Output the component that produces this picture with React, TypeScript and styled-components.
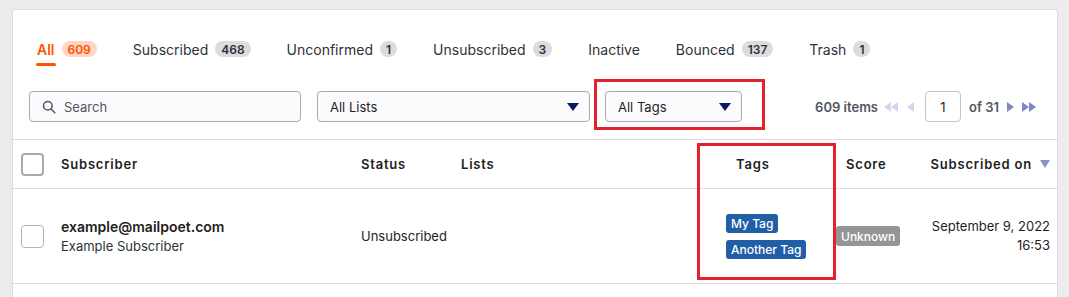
import { FC } from "react";
import styled, { createGlobalStyle } from "styled-components";

const GlobalStyle = createGlobalStyle`
  body {
    margin: 0;
    background: #ececec;
    font-family: Inter, "Liberation Sans", sans-serif;
    color: #1e1e1e;
  }
`;

const Page = styled.div`
  padding: 9px 11px 0 12px;
  height: 297px;
  box-sizing: border-box;
  overflow: hidden;
`;

const Card = styled.div`
  position: relative;
  background: #fff;
  border: 1px solid #dcdcde;
  border-bottom: none;
  border-radius: 4px 4px 0 0;
  height: 320px;
`;

const Tabs = styled.div`
  display: flex;
  align-items: center;
  gap: 36px;
  padding: 26px 0 0 24px;
  height: 26px;
`;

const Tab = styled.div<{ $active?: boolean }>`
  position: relative;
  display: flex;
  align-items: center;
  gap: 7px;
  font-size: 14px;
  font-weight: ${(p) => (p.$active ? 600 : 400)};
  color: ${(p) => (p.$active ? "#ff5301" : "#2c3338")};
`;

const TabLabel = styled.span<{ $active?: boolean }>`
  position: relative;
  &:after {
    content: "";
    display: ${(p) => (p.$active ? "block" : "none")};
    position: absolute;
    left: -1px;
    right: -1px;
    top: 22px;
    height: 3px;
    border-radius: 2px;
    background: #ff5301;
  }
`;

const Count = styled.span<{ $active?: boolean }>`
  display: inline-flex;
  align-items: center;
  height: 16px;
  padding: 0 6px;
  border-radius: 8px;
  font-size: 12px;
  font-weight: 600;
  background: ${(p) => (p.$active ? "#ffd6c4" : "#dcdcde")};
  color: ${(p) => (p.$active ? "#ff5301" : "#2c3338")};
`;

const Filters = styled.div`
  display: flex;
  align-items: center;
  padding: 29px 0 0 16px;
  height: 31px;
`;

const Field = styled.div<{ $width: number; $gap: number }>`
  display: flex;
  align-items: center;
  box-sizing: border-box;
  width: ${(p) => p.$width}px;
  height: 31px;
  margin-right: ${(p) => p.$gap}px;
  padding: 0 10px 0 12px;
  border: 1px solid #a7aaad;
  border-radius: 4px;
  background: #fbfbfd;
  font-size: 13px;
  color: #1e1e1e;
`;

const Placeholder = styled.span`
  margin-left: 8px;
  color: #50575e;
`;

const Arrow = styled.span`
  margin-left: auto;
  width: 0;
  height: 0;
  border-left: 6px solid transparent;
  border-right: 6px solid transparent;
  border-top: 8px solid #0a1a60;
`;

const Pager = styled.div`
  display: flex;
  align-items: center;
  margin-left: auto;
  margin-right: 21px;
  font-size: 13px;
  font-weight: 600;
  color: #50575e;
`;

const PageInput = styled.div`
  box-sizing: border-box;
  width: 36px;
  height: 31px;
  margin: 0 8px 0 11px;
  border: 1px solid #c3c4c7;
  border-radius: 4px;
  display: flex;
  align-items: center;
  justify-content: center;
  font-weight: 400;
  color: #1e1e1e;
`;

const PagerIcon = styled.svg<{ $muted?: boolean }>`
  fill: ${(p) => (p.$muted ? "#d3d6ef" : "#8088c6")};
  margin-left: 6px;
`;

const Row = styled.div<{ $head?: boolean }>`
  display: grid;
  grid-template-columns: 48px 300px 100px 265px 110px 92px 1fr;
  align-items: center;
  height: ${(p) => (p.$head ? 48 : 94)}px;
  border-top: 1px solid #dcdcde;
`;

const Table = styled.div`
  margin-top: 17px;
  & > div:last-child {
    border-bottom: 1px solid #dcdcde;
  }
`;

const HeadCell = styled.div<{ $pad?: number; $right?: boolean }>`
  display: flex;
  align-items: center;
  justify-content: ${(p) => (p.$right ? "flex-end" : "flex-start")};
  gap: 8px;
  padding-left: ${(p) => p.$pad ?? 0}px;
  padding-right: ${(p) => (p.$right ? 7 : 0)}px;
  font-size: 13px;
  font-weight: 600;
  letter-spacing: 0.8px;
  color: #1e1e1e;
`;

const Cell = styled.div<{ $right?: boolean }>`
  display: flex;
  flex-direction: column;
  align-items: ${(p) => (p.$right ? "flex-end" : "flex-start")};
  padding-right: ${(p) => (p.$right ? 7 : 0)}px;
  font-size: 13px;
  line-height: 19px;
  color: #1e1e1e;
`;

const Checkbox = styled.span<{ $head?: boolean }>`
  box-sizing: border-box;
  width: 23px;
  height: 23px;
  margin-left: 8px;
  border: ${(p) => (p.$head ? "2px solid #a7aaad" : "1px solid #b4b6b9")};
  border-radius: 4px;
  background: #fff;
`;

const Email = styled.span`
  font-size: 14px;
  font-weight: 600;
`;

const Name = styled.span`
  margin-top: 1px;
  color: #2c3338;
`;

const TagList = styled.div`
  display: flex;
  flex-direction: column;
  align-items: flex-start;
  gap: 7px;
`;

const Tag = styled.span<{ $grey?: boolean }>`
  display: inline-flex;
  align-items: center;
  height: ${(p) => (p.$grey ? 20 : 19)}px;
  padding: 0 5px;
  border-radius: 3px;
  font-size: 12px;
  font-weight: 500;
  color: #fff;
  background: ${(p) => (p.$grey ? "#959595" : "#205ea6")};
`;

const Highlight = styled.div`
  position: absolute;
  border: 3px solid #e5202e;
  pointer-events: none;
`;

const SortArrow = styled.span`
  width: 0;
  height: 0;
  border-left: 5px solid transparent;
  border-right: 5px solid transparent;
  border-top: 8px solid #8a8fc8;
`;

const tabs = [
  { label: "All", count: "609", active: true },
  { label: "Subscribed", count: "468" },
  { label: "Unconfirmed", count: "1" },
  { label: "Unsubscribed", count: "3" },
  { label: "Inactive" },
  { label: "Bounced", count: "137" },
  { label: "Trash", count: "1" },
];

const SearchIcon: FC = () => (
  <svg width="14" height="14" viewBox="0 0 14 14" fill="none" stroke="#50575e" strokeWidth="1.5">
    <circle cx="5.8" cy="5.8" r="4.3" />
    <path d="M9 9l3.8 3.8" strokeLinecap="round" />
  </svg>
);

const App: FC = () => (
  <Page>
    <GlobalStyle />
    <Card>
      <Tabs>
        {tabs.map((t) => (
          <Tab key={t.label} $active={t.active}>
            <TabLabel $active={t.active}>{t.label}</TabLabel>
            {t.count && <Count $active={t.active}>{t.count}</Count>}
          </Tab>
        ))}
      </Tabs>

      <Filters>
        <Field $width={272} $gap={16}>
          <SearchIcon />
          <Placeholder>Search</Placeholder>
        </Field>
        <Field $width={273} $gap={15}>
          All Lists
          <Arrow />
        </Field>
        <Field $width={137} $gap={0}>
          All Tags
          <Arrow />
        </Field>
        <Pager>
          609 items
          <PagerIcon $muted width="14" height="10" viewBox="0 0 14 10">
            <path d="M7 0v10L0 5zM14 0v10L7 5z" />
          </PagerIcon>
          <PagerIcon $muted width="7" height="10" viewBox="0 0 7 10" style={{ marginLeft: 9 }}>
            <path d="M7 0v10L0 5z" />
          </PagerIcon>
          <PageInput>1</PageInput>
          of 31
          <PagerIcon width="7" height="10" viewBox="0 0 7 10" style={{ marginLeft: 8 }}>
            <path d="M0 0v10l7-5z" />
          </PagerIcon>
          <PagerIcon width="14" height="10" viewBox="0 0 14 10" style={{ marginLeft: 8 }}>
            <path d="M0 0v10l7-5zM7 0v10l7-5z" />
          </PagerIcon>
        </Pager>
      </Filters>

      <Table>
        <Row $head>
          <HeadCell>
            <Checkbox $head />
          </HeadCell>
          <HeadCell>Subscriber</HeadCell>
          <HeadCell>Status</HeadCell>
          <HeadCell>Lists</HeadCell>
          <HeadCell $pad={10}>Tags</HeadCell>
          <HeadCell $pad={10}>Score</HeadCell>
          <HeadCell $right>
            Subscribed on
            <SortArrow />
          </HeadCell>
        </Row>
        <Row>
          <Cell>
            <Checkbox />
          </Cell>
          <Cell>
            <Email>example@mailpoet.com</Email>
            <Name>Example Subscriber</Name>
          </Cell>
          <Cell>Unsubscribed</Cell>
          <Cell />
          <Cell>
            <TagList>
              <Tag>My Tag</Tag>
              <Tag>Another Tag</Tag>
            </TagList>
          </Cell>
          <Cell>
            <Tag $grey>Unknown</Tag>
          </Cell>
          <Cell $right>
            <span>September 9, 2022</span>
            <span>16:53</span>
          </Cell>
        </Row>
      </Table>

      <Highlight style={{ left: 581, top: 69, width: 165, height: 45 }} />
      <Highlight style={{ left: 684, top: 133, width: 133, height: 131 }} />
    </Card>
  </Page>
);

export default App;
